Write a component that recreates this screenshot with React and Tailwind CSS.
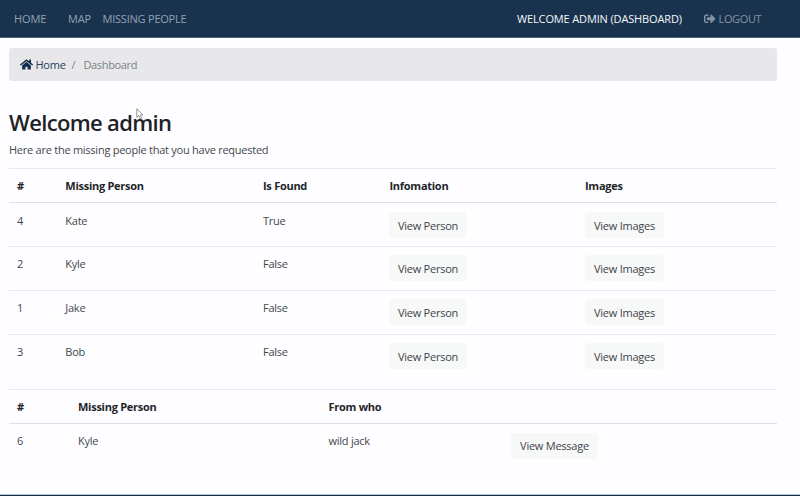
import { FaHome, FaSignOutAlt } from "react-icons/fa";

const people = [
  { id: 4, name: "Kate", found: "True" },
  { id: 2, name: "Kyle", found: "False" },
  { id: 1, name: "Jake", found: "False" },
  { id: 3, name: "Bob", found: "False" },
];

function Button({ children, className }) {
  return (
    <button
      className={`flex h-[26px] items-center justify-center rounded-[3px] bg-[#f7f8f8] whitespace-nowrap tracking-[-0.24px] text-[#3f4449] ${className}`}
    >
      {children}
    </button>
  );
}

function PeopleTable() {
  const cols = "grid grid-cols-[48.3px_197.7px_126.5px_195.5px_1fr] pl-2";
  return (
    <section>
      <div className={`${cols} h-[35px] items-center border-t border-b border-t-[#e6e8eb] border-b-[#dfe1e4] font-bold text-[#212529] tracking-[-0.27px]`}>
        <span>#</span>
        <span>Missing Person</span>
        <span>Is Found</span>
        <span>Infomation</span>
        <span>Images</span>
      </div>
      {people.map((p, i) => (
        <div
          key={p.id}
          className={`${cols} items-start ${i > 0 ? "h-[44px] border-t border-[#e6e8eb] pt-[8px]" : "h-[43px] pt-[9px]"}`}
        >
          <span className="leading-[18px]">{p.id}</span>
          <span className="leading-[18px]">{p.name}</span>
          <span className="leading-[18px]">{p.found}</span>
          <Button className="w-[77px]">View Person</Button>
          <Button className="w-[79px]">View Images</Button>
        </div>
      ))}
    </section>
  );
}

function MessageTable() {
  const cols = "grid grid-cols-[61px_250.5px_182.5px_1fr] pl-2";
  return (
    <section className="mt-[11px]">
      <div className={`${cols} h-[35px] items-center border-t border-b border-t-[#e6e8eb] border-b-[#dfe1e4] font-bold text-[#212529] tracking-[-0.27px]`}>
        <span>#</span>
        <span>Missing Person</span>
        <span>From who</span>
      </div>
      <div className={`${cols} items-start pt-[9px]`}>
        <span className="leading-[16px]">6</span>
        <span className="leading-[16px]">Kyle</span>
        <span className="leading-[16px]">wild jack</span>
        <Button className="w-[87px] pb-[2px]">View Message</Button>
      </div>
    </section>
  );
}

export default function App() {
  return (
    <div className="relative flex h-[496px] w-[800px] flex-col overflow-hidden bg-[#fefdff] font-['Open_Sans','Noto_Sans',sans-serif] text-[11px] leading-[17px] tracking-[-0.25px] text-[#43484c]">
      <nav className="flex h-[38px] shrink-0 items-center border-b border-[#4a6078] bg-[#19334f] pl-[14px] tracking-[-0.14px] text-[#94a1af]">
        <span className="w-[54px]">HOME</span>
        <span className="w-[34.5px]">MAP</span>
        <span className="tracking-[-0.22px]">MISSING PEOPLE</span>
        <span className="ml-auto w-[187px] whitespace-nowrap text-[#f4f6f8]">WELCOME ADMIN (DASHBOARD)</span>
        <span className="flex w-[96px] items-center gap-[3px] tracking-[-0.35px] text-[#8493a3]">
          <FaSignOutAlt size={11.5} />
          LOGOUT
        </span>
      </nav>
      <main className="ml-[9px] flex w-[768px] flex-col pt-[10px]">
        <div className="flex h-[33px] shrink-0 items-center rounded-[3px] bg-[#e8e8eb] pl-[11px]">
          <FaHome size={13} className="text-[#132c49]" />
          <span className="ml-[2.5px] text-[#25405c]">Home</span>
          <span className="ml-[6px] text-[#7b8288]">/</span>
          <span className="ml-[8px] text-[#7b8288] tracking-[-0.33px]">Dashboard</span>
        </div>
        <h1 className="mt-[28px] text-[22px] leading-[27px] font-semibold tracking-[-0.66px] text-[#1d2226]">Welcome admin</h1>
        <p className="mt-[5px] mb-[10px] leading-[17px]">Here are the missing people that you have requested</p>
        <PeopleTable />
        <MessageTable />
      </main>
      <svg className="absolute top-[108px] left-[136px]" width="8" height="12" viewBox="0 0 8 12">
        <path d="M.8.8v8.5L2.8 7.5 4.2 10.7 5.6 10 4.2 7H7Z" fill="#fff" stroke="#77797c" strokeWidth=".8" />
      </svg>
      <footer className="mt-auto h-[2px] shrink-0 border-t border-[#b9cbd6] bg-[#132c49]" />
    </div>
  );
}
